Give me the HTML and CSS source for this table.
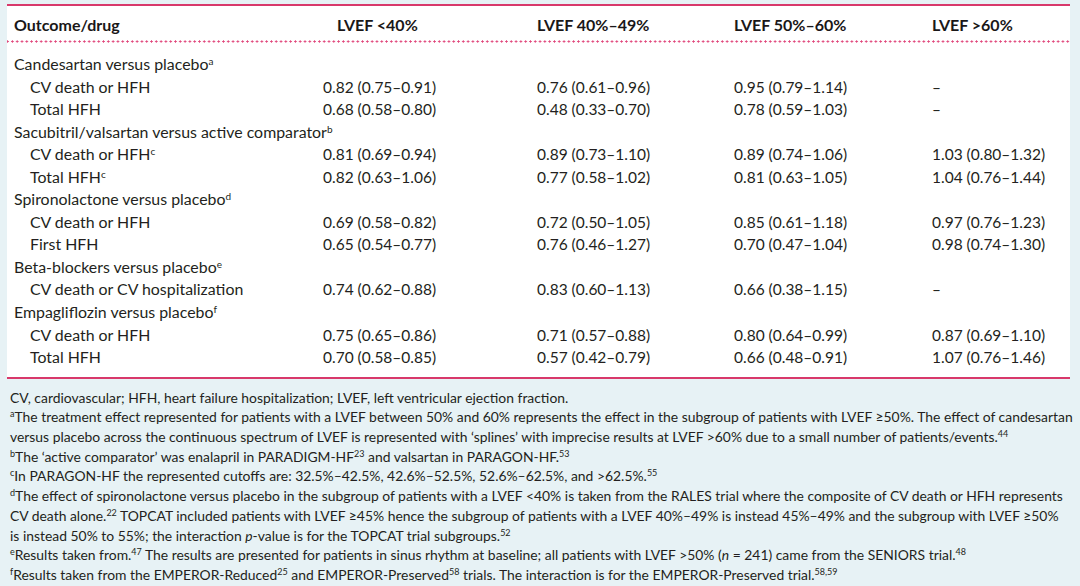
FILE: index.html
```html
<!DOCTYPE html>
<html lang="en">
<head>
<meta charset="utf-8">
<title>LVEF table</title>
<link rel="stylesheet" href="styles.css">
</head>
<body>
<div class="page">
  <div class="panel">
    <div class="row head">
      <div class="c1">Outcome/drug</div>
      <div class="c2 first">LVEF &lt;40%</div>
      <div>LVEF 40%–49%</div>
      <div>LVEF 50%–60%</div>
      <div>LVEF &gt;60%</div>
    </div>
    <div class="body">
      <div class="row"><div class="c1">Candesartan versus placebo<sup>a</sup></div><div></div><div></div><div></div><div></div></div>
      <div class="row"><div class="c1 sub">CV death or HFH</div><div>0.82 (0.75–0.91)</div><div>0.76 (0.61–0.96)</div><div>0.95 (0.79–1.14)</div><div>–</div></div>
      <div class="row"><div class="c1 sub">Total HFH</div><div>0.68 (0.58–0.80)</div><div>0.48 (0.33–0.70)</div><div>0.78 (0.59–1.03)</div><div>–</div></div>
      <div class="row"><div class="c1">Sacubitril/valsartan versus active comparator<sup>b</sup></div><div></div><div></div><div></div><div></div></div>
      <div class="row"><div class="c1 sub">CV death or HFH<sup>c</sup></div><div>0.81 (0.69–0.94)</div><div>0.89 (0.73–1.10)</div><div>0.89 (0.74–1.06)</div><div>1.03 (0.80–1.32)</div></div>
      <div class="row"><div class="c1 sub">Total HFH<sup>c</sup></div><div>0.82 (0.63–1.06)</div><div>0.77 (0.58–1.02)</div><div>0.81 (0.63–1.05)</div><div>1.04 (0.76–1.44)</div></div>
      <div class="row"><div class="c1">Spironolactone versus placebo<sup>d</sup></div><div></div><div></div><div></div><div></div></div>
      <div class="row"><div class="c1 sub">CV death or HFH</div><div>0.69 (0.58–0.82)</div><div>0.72 (0.50–1.05)</div><div>0.85 (0.61–1.18)</div><div>0.97 (0.76–1.23)</div></div>
      <div class="row"><div class="c1 sub">First HFH</div><div>0.65 (0.54–0.77)</div><div>0.76 (0.46–1.27)</div><div>0.70 (0.47–1.04)</div><div>0.98 (0.74–1.30)</div></div>
      <div class="row"><div class="c1">Beta-blockers versus placebo<sup>e</sup></div><div></div><div></div><div></div><div></div></div>
      <div class="row"><div class="c1 sub">CV death or CV hospitalization</div><div>0.74 (0.62–0.88)</div><div>0.83 (0.60–1.13)</div><div>0.66 (0.38–1.15)</div><div>–</div></div>
      <div class="row"><div class="c1">Empagliflozin versus placebo<sup>f</sup></div><div></div><div></div><div></div><div></div></div>
      <div class="row"><div class="c1 sub">CV death or HFH</div><div>0.75 (0.65–0.86)</div><div>0.71 (0.57–0.88)</div><div>0.80 (0.64–0.99)</div><div>0.87 (0.69–1.10)</div></div>
      <div class="row"><div class="c1 sub">Total HFH</div><div>0.70 (0.58–0.85)</div><div>0.57 (0.42–0.79)</div><div>0.66 (0.48–0.91)</div><div>1.07 (0.76–1.46)</div></div>
    </div>
  </div>
  <div class="notes">
    <p>CV, cardiovascular; HFH, heart failure hospitalization; LVEF, left ventricular ejection fraction.</p>
    <p><sup>a</sup>The treatment effect represented for patients with a LVEF between 50% and 60% represents the effect in the subgroup of patients with LVEF ≥50%. The effect of candesartan<br>versus placebo across the continuous spectrum of LVEF is represented with ‘splines’ with imprecise results at LVEF &gt;60% due to a small number of patients/events.<sup>44</sup></p>
    <p><sup>b</sup>The ‘active comparator’ was enalapril in PARADIGM-HF<sup>23</sup> and valsartan in PARAGON-HF.<sup>53</sup></p>
    <p><sup>c</sup>In PARAGON-HF the represented cutoffs are: 32.5%–42.5%, 42.6%–52.5%, 52.6%–62.5%, and &gt;62.5%.<sup>55</sup></p>
    <p><sup>d</sup>The effect of spironolactone versus placebo in the subgroup of patients with a LVEF &lt;40% is taken from the RALES trial where the composite of CV death or HFH represents<br>CV death alone.<sup>22</sup> TOPCAT included patients with LVEF ≥45% hence the subgroup of patients with a LVEF 40%–49% is instead 45%–49% and the subgroup with LVEF ≥50%<br>is instead 50% to 55%; the interaction <i>p</i>-value is for the TOPCAT trial subgroups.<sup>52</sup></p>
    <p><sup>e</sup>Results taken from.<sup>47</sup> The results are presented for patients in sinus rhythm at baseline; all patients with LVEF &gt;50% (<i>n</i> = 241) came from the SENIORS trial.<sup>48</sup></p>
    <p><sup>f</sup>Results taken from the EMPEROR-Reduced<sup>25</sup> and EMPEROR-Preserved<sup>58</sup> trials. The interaction is for the EMPEROR-Preserved trial.<sup>58,59</sup></p>
  </div>
</div>
</body>
</html>
```
FILE: styles.css
```css
html, body {
  margin: 0;
  padding: 0;
  background: #e7f2f5;
}
body {
  font-family: Lato, "Liberation Sans", sans-serif;
  color: #231f20;
  width: 1080px;
  height: 586px;
  overflow: hidden;
}
.page {
  padding: 0 10px 0 7px;
}
.panel {
  background: #ffffff;
  border-top: 2px solid #d8396b;
  border-bottom: 2px solid #d8396b;
  margin-top: 4px;
  padding-bottom: 8px;
}
.row {
  display: grid;
  grid-template-columns: 316px 214px 197px 198px 1fr;
  font-size: 15.5px;
  line-height: 22.54px;
  white-space: nowrap;
}
.c1 {
  padding-left: 7px;
  font-size: 15.9px;
}
.c1.sub {
  padding-left: 23px;
}
.head {
  font-weight: 700;
  font-size: 16px;
  color: #1a1718;
  padding-top: 9px;
  padding-bottom: 8px;
  line-height: 20px;
  background-image: radial-gradient(circle, #e0457a 0.9px, rgba(224,69,122,0) 1.3px);
  background-size: 4.8px 3px;
  background-repeat: repeat-x;
  background-position: 3px 100%;
}
.head .c1 {
  font-size: 16px;
}
.head .first {
  padding-left: 14px;
}
.body {
  padding-top: 10px;
}
sup {
  font-size: 10px;
  line-height: 0;
  vertical-align: 5px;
}
.notes {
  padding: 9px 0 0 3px;
  font-size: 13.9px;
  line-height: 19.7px;
  color: #231f20;
  white-space: nowrap;
}
.notes p {
  margin: 0;
}
.notes sup {
  font-size: 9px;
  vertical-align: 5px;
}
```
